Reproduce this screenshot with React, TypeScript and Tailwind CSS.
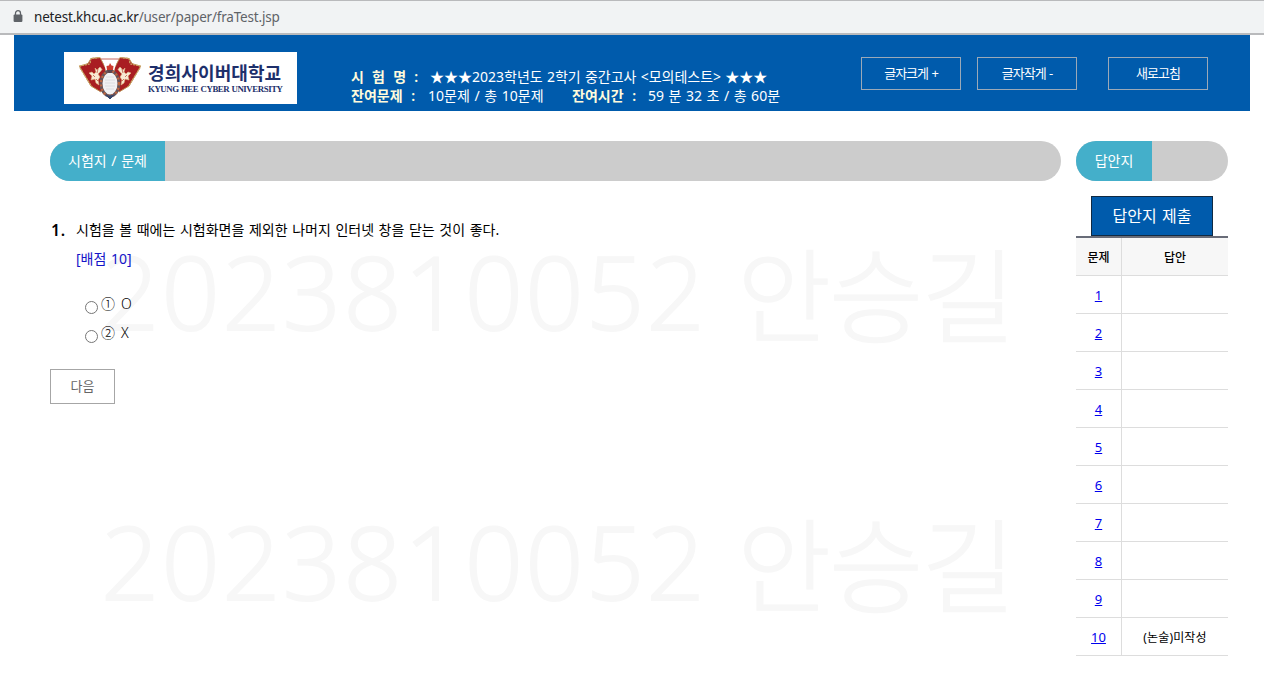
import React from "react";

const answers = ["", "", "", "", "", "", "", "", "", "(논술)미작성"];

function Lock() {
  return (
    <svg width="10" height="13" viewBox="0 0 10 13" className="mb-[2px] shrink-0">
      <path d="M2.5 5V3.2a2.5 2.5 0 0 1 5 0V5" fill="none" stroke="#5f6368" strokeWidth="1.3" />
      <rect x="0.6" y="4.6" width="8.8" height="7.4" rx="1" fill="#5f6368" />
    </svg>
  );
}

function Flag() {
  return (
    <>
      <path d="M1.5 10.5 L10 7.5 L13 2.5 L22 1.5 L28 13 L23 36 L13 30Z" fill="#a91d22" stroke="#b98b50" strokeWidth="1" />
      <path d="M1 10 L12 8 L13 2.5 L22 1.5 M2 12 L14 31" fill="none" stroke="#cda968" strokeWidth="1.2" strokeDasharray="2 1" />
      <path d="M17 12 L19 14 L22 11 L24 13.5 L22 16 L20 18 L22 21 L20 24 L21 29 L18 27 L17 23 L13 24 L14 20 L11 17 L14 16 L16 18 L18 16Z" fill="#f8e8d4" stroke="#e2b884" strokeWidth="0.6" />
      <path d="M15 19 L17 21 M20 13 L19 17 M18 23 L20 25" stroke="#b5482f" strokeWidth="0.7" />
    </>
  );
}

function Crest() {
  return (
    <svg width="64" height="44" viewBox="0 0 64 44" className="shrink-0">
      <path d="M22 3 L42 3 L40 14 L24 14Z" fill="#fff" stroke="#b8403a" strokeWidth="0.8" />
      <Flag />
      <g transform="translate(64 0) scale(-1 1)">
        <Flag />
      </g>
      <path d="M25 4 L39 4 L36 15 L28 15Z" fill="#fff" />
      <ellipse cx="32" cy="27.5" rx="9" ry="12.5" fill="#f1f1f2" stroke="#66545a" strokeWidth="3" />
      <ellipse cx="32" cy="27.5" rx="9" ry="12.5" fill="none" stroke="#c0663f" strokeWidth="2.2" strokeDasharray="2 2.4" />
      <path d="M28 21h8M27 24h10M27 27h10M27 30h10M28 33h8" stroke="#d8d9dc" strokeWidth="0.8" />
      <path d="M29 14 L28.5 10 L31 9.5 L32 7 L33.5 9.5 L35.5 10 L35 14Z" fill="#cc3c2e" />
      <path d="M29 14h6l-1.5 3h-3z" fill="#5b4650" />
      <path d="M28 39 L32 43 L36 39 L33 40 L31 40Z" fill="#36466b" stroke="#36466b" />
    </svg>
  );
}

function HeaderButton({ children, className }: { children: React.ReactNode; className: string }) {
  return (
    <button className={`h-[33px] w-[100px] border border-[#9ba9b8] text-[13px] tracking-[-1px] text-white [word-spacing:1px] ${className}`}>
      {children}
    </button>
  );
}

function Watermark() {
  return (
    <div className="flex h-[270px] items-start whitespace-nowrap text-[102px] leading-[150px] font-light text-[#f7f7f7]">
      <span className="w-[636px] font-['Open_Sans','Noto_Sans',sans-serif] tracking-[2.4px] [-webkit-text-stroke:2px_#f7f7f7]">2023810052</span>
      <span className="font-['Noto_Sans_CJK_KR',sans-serif] tracking-[-1.5px] [-webkit-text-stroke:1.6px_#f7f7f7]">안승길</span>
    </div>
  );
}

function Choice({ mark, label }: { mark: string; label: string }) {
  return (
    <label className="flex h-[29px] items-start">
      <input
        type="radio"
        name="q1"
        className="mt-[10px] mr-[3px] h-[13px] w-[13px] appearance-none rounded-full border border-[#767676] bg-white"
      />
      <span className="w-[20px] text-[14px] leading-[26px] font-light">{mark}</span>
      <span className="text-[14px] leading-[26px] font-light">{label}</span>
    </label>
  );
}

export default function App() {
  return (
    <div className="relative h-[679px] w-[1264px] overflow-hidden bg-white font-['Noto_Sans','Noto_Sans_CJK_KR',sans-serif] text-black">
      <div className="absolute top-[216px] left-[101px]">
        <Watermark />
        <Watermark />
      </div>
      <div className="relative">
        <div className="flex h-[35px] items-center gap-[11px] border-t border-b-2 border-t-[#b9babc] border-b-[#b9babc] bg-[#f1f3f4] pl-[13px] text-[13.5px]">
          <Lock />
          <span className="tracking-[-0.19px] text-[#5f6368]">
            <span className="text-[#202124]">netest.khcu.ac.kr</span>/user/paper/fraTest.jsp
          </span>
        </div>

        <header className="mx-[14px] flex h-[76px] bg-[#005bac] text-white">
          <div className="mt-[17px] ml-[50px] flex h-[52px] w-[233px] bg-white pt-[4px] pl-[14px]">
            <Crest />
            <div className="ml-[6px] whitespace-nowrap text-[#1d2f6b]">
              <div className="mt-[4px] font-['Noto_Sans_CJK_KR',sans-serif] text-[18px] leading-[24px] font-bold tracking-[0.1px]">경희사이버대학교</div>
              <div className="font-['Liberation_Serif',serif] text-[8.8px] leading-[10px] font-bold tracking-[-0.42px] [word-spacing:0.5px]">KYUNG HEE CYBER UNIVERSITY</div>
            </div>
          </div>
          <div className="mt-[32px] ml-[54px] w-[510px] whitespace-nowrap text-[14px] leading-[19px]">
            <div className="flex">
              <b className="w-[79px] font-semibold text-[#fffbdc] [word-spacing:4.6px]">시 험 명 :</b>
              <span className="[word-spacing:0.6px]">★★★2023학년도 2학기 중간고사 &lt;모의테스트&gt; ★★★</span>
            </div>
            <div className="flex">
              <b className="w-[77px] font-semibold text-[#fffbdc] [word-spacing:5px]">잔여문제 :</b>
              <span className="w-[144px] [word-spacing:1px]">10문제 / 총 10문제</span>
              <b className="w-[76px] font-semibold text-[#fffbdc] [word-spacing:5px]">잔여시간 :</b>
              <span className="[word-spacing:0.9px]">59 분 32 초 / 총 60분</span>
            </div>
          </div>
          <div className="mt-[22px] flex">
            <HeaderButton className="">글자크게 +</HeaderButton>
            <HeaderButton className="ml-[16px]">글자작게 -</HeaderButton>
            <HeaderButton className="ml-[31px]">새로고침</HeaderButton>
          </div>
        </header>

        <main className="flex gap-[15px] pt-[30px] pl-[50px]">
          <section className="w-[1011px]">
            <div className="flex h-[40px] overflow-hidden rounded-full bg-[#ccc]">
              <h2 className="w-[115px] bg-[#44afca] text-center text-[14px] leading-[40px] text-white [word-spacing:1px]">시험지 / 문제</h2>
            </div>
            <div className="mt-[34px] flex">
              <b className="w-[26px] pl-px text-[16px] leading-[30px] font-semibold tracking-[0.5px]">1.</b>
              <div className="whitespace-nowrap text-[14px] leading-[29px]">
                <p className="[word-spacing:0.95px]">시험을 볼 때에는 시험화면을 제외한 나머지 인터넷 창을 닫는 것이 좋다.</p>
                <p className="text-[#1414c8] [word-spacing:1px]">[배점 10]</p>
              </div>
            </div>
            <div className="mt-[18px] ml-[35px]">
              <Choice mark="①" label="O" />
              <Choice mark="②" label="X" />
            </div>
            <button className="mt-[20px] h-[35px] w-[65px] border border-[#a6a6a6] bg-white text-[13px] text-[#666]">다음</button>
          </section>

          <aside className="w-[152px]">
            <div className="flex h-[40px] overflow-hidden rounded-full bg-[#ccc]">
              <h2 className="w-[76px] bg-[#44afca] text-center text-[14px] leading-[40px] text-white">답안지</h2>
            </div>
            <button className="mt-[15px] ml-[15px] block h-[40px] w-[122px] border border-[#102a43] bg-[#005bac] text-[16px] text-white [word-spacing:1px]">답안지 제출</button>
            <div className="border-t-2 border-[#686c78] text-center text-[12px]">
              <div className="flex h-[38px] border-b border-[#ddd] bg-[#f7f7f7] leading-[39px] font-medium">
                <div className="w-[46px] border-r border-[#ddd]">문제</div>
                <div className="flex-1">답안</div>
              </div>
              {answers.map((answer, i) => (
                <div key={i} className="flex h-[38px] border-b border-[#ddd] leading-[39px]">
                  <div className="w-[46px] border-r border-[#ddd]">
                    <a href="#" className="text-[13px] text-[#0000ee] underline">{i + 1}</a>
                  </div>
                  <div className="flex-1 tracking-[0.15px]">{answer}</div>
                </div>
              ))}
            </div>
          </aside>
        </main>
      </div>
    </div>
  );
}
